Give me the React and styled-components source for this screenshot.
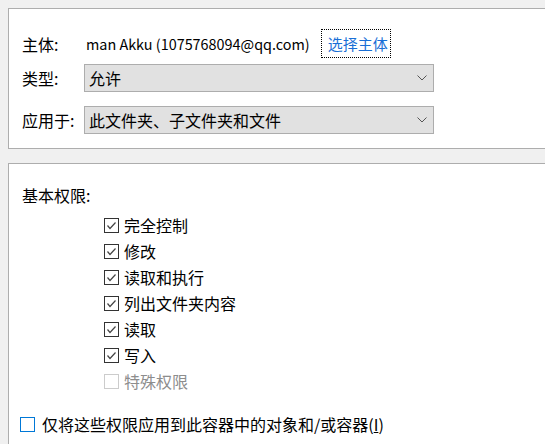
import React from 'react';
import styled, { createGlobalStyle } from 'styled-components';

const GlobalStyle = createGlobalStyle`
  html, body {
    margin: 0;
    padding: 0;
    background: #f0f0f0;
    overflow: hidden;
  }
  body {
    font-family: "Noto Sans CJK SC", "Noto Sans", sans-serif;
    font-size: 16px;
    color: #000;
  }
`;

const Page = styled.div`
  width: 545px;
  height: 444px;
  padding: 8px 0 0 8px;
  box-sizing: border-box;
  overflow: hidden;
`;

const Panel = styled.div`
  background: #fff;
  border: 1px solid #adadad;
  margin-right: -20px;
  box-sizing: border-box;
  height: ${p => p.$height}px;
  margin-top: ${p => p.$top || 0}px;
  padding: ${p => p.$padTop}px 0 0 13px;
`;

const Field = styled.div`
  display: flex;
  align-items: center;
  height: ${p => p.$height}px;
  margin-top: ${p => p.$top || 0}px;
`;

const Label = styled.div`
  width: 62px;
  flex-shrink: 0;
  line-height: 20px;
`;

const Principal = styled.span`
  margin-left: 2px;
  font-size: 14.4px;
  line-height: 20px;
  white-space: nowrap;
`;

const LinkButton = styled.span`
  display: flex;
  align-items: center;
  height: 29px;
  box-sizing: border-box;
  margin-left: 11px;
  padding: 0 2px 0 6px;
  border: 1px dotted #000;
  color: #1a6fd6;
  font-size: 15px;
`;

const Select = styled.div`
  display: flex;
  align-items: center;
  justify-content: space-between;
  width: 350px;
  height: 28px;
  box-sizing: border-box;
  border: 1px solid #adadad;
  background: #e1e1e1;
  padding: 0 6px 0 4px;
  line-height: 20px;
`;

const Heading = styled.div`
  line-height: 20px;
`;

const List = styled.div`
  margin: 8px 0 0 82px;
`;

const CheckRow = styled.div`
  display: flex;
  align-items: flex-start;
  height: 26px;
  margin-left: ${p => p.$indent || 0}px;
  margin-top: ${p => p.$top || 0}px;
  color: ${p => (p.$disabled ? '#8d8d8d' : '#000')};
`;

const Box = styled.span`
  width: 15px;
  height: 15px;
  box-sizing: border-box;
  margin-top: 5px;
  flex-shrink: 0;
  border: 1px solid ${p => p.$border};
  background: #fff;
  display: flex;
  align-items: center;
  justify-content: center;
`;

const CheckText = styled.span`
  margin-left: ${p => p.$gap || 5}px;
  line-height: 24px;
  white-space: nowrap;
`;

const Chevron = () => (
  <svg width="10" height="6" viewBox="0 0 10 6">
    <polyline points="0.5,0.5 5,5 9.5,0.5" fill="none" stroke="#555" strokeWidth="1" />
  </svg>
);

const Tick = () => (
  <svg width="13" height="13" viewBox="0 0 13 13">
    <polyline points="2.5,6.5 5,9.5 10.5,3.5" fill="none" stroke="#444" strokeWidth="1.2" />
  </svg>
);

const Check = ({ checked, disabled, focus, label, indent, top, gap }) => {
  let border = '#333';
  if (disabled) border = '#cccccc';
  if (focus) border = '#0078d7';
  return (
    <CheckRow $disabled={disabled} $indent={indent} $top={top}>
      <Box $border={border}>{checked && <Tick />}</Box>
      <CheckText $gap={gap}>{label}</CheckText>
    </CheckRow>
  );
};

const perms = [
  { label: '完全控制', checked: true },
  { label: '修改', checked: true },
  { label: '读取和执行', checked: true },
  { label: '列出文件夹内容', checked: true },
  { label: '读取', checked: true },
  { label: '写入', checked: true },
  { label: '特殊权限', checked: false, disabled: true },
];

export default function App() {
  return (
    <>
      <GlobalStyle />
      <Page>
        <Panel $height={141} $padTop={20}>
          <Field $height={29}>
            <Label>主体:</Label>
            <Principal>man Akku (1075768094@qq.com)</Principal>
            <LinkButton>选择主体</LinkButton>
          </Field>
          <Field $height={28} $top={6}>
            <Label>类型:</Label>
            <Select>
              <span>允许</span>
              <Chevron />
            </Select>
          </Field>
          <Field $height={28} $top={14}>
            <Label>应用于:</Label>
            <Select>
              <span>此文件夹、子文件夹和文件</span>
              <Chevron />
            </Select>
          </Field>
        </Panel>
        <Panel $height={300} $top={14} $padTop={21}>
          <Heading>基本权限:</Heading>
          <List>
            {perms.map(p => (
              <Check key={p.label} {...p} />
            ))}
          </List>
          <Check
            indent={-2}
            top={17}
            focus
            gap={7}
            label={<>仅将这些权限应用到此容器中的对象和/或容器(<u>I</u>)</>}
          />
        </Panel>
      </Page>
    </>
  );
}
